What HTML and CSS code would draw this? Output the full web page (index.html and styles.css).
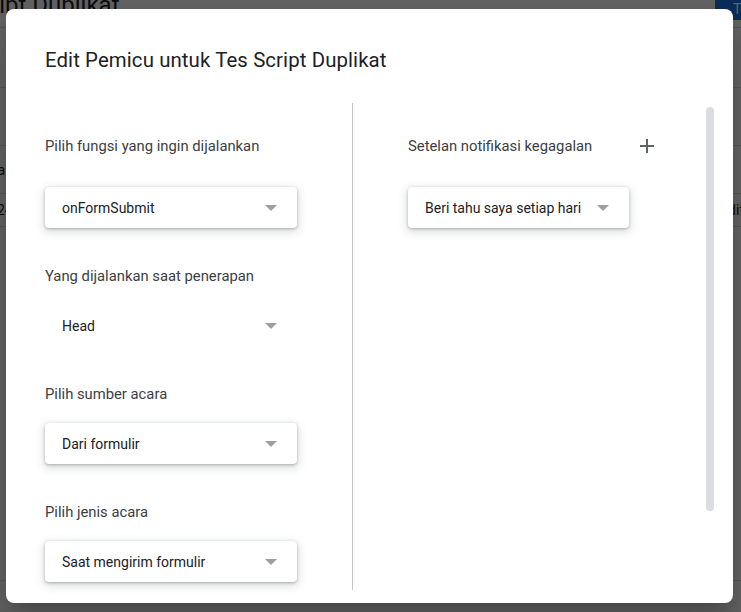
FILE: index.html
```html
<!DOCTYPE html>
<html lang="id">
<head>
<meta charset="utf-8">
<title>Edit Pemicu</title>
<link rel="stylesheet" href="styles.css">
</head>
<body>
<div class="page" aria-hidden="true">
  <div class="page-header">
    <div class="page-title">Tes Script Duplikat</div>
    <div class="page-btn">Tambahkan Pemicu</div>
  </div>
  <div class="page-toolbar"></div>
  <div class="page-row row-h"></div>
  <div class="page-row row-a"><span class="cell-left">Data</span><span class="cell-right"></span></div>
  <div class="page-row row-b"><span class="cell-left">24</span><span class="cell-right">Edit</span></div>
  <div class="page-row row-c"></div>
</div>
<div class="scrim"></div>

<div class="dialog" role="dialog">
  <h1 class="dialog-title">Edit Pemicu untuk Tes Script Duplikat</h1>
  <div class="dialog-body">
    <div class="col col-left">
      <div class="field">
        <div class="field-label tall">Pilih fungsi yang ingin dijalankan</div>
        <div class="select"><span>onFormSubmit</span><span class="arrow"></span></div>
      </div>
      <div class="field">
        <div class="field-label">Yang dijalankan saat penerapan</div>
        <div class="select flat"><span>Head</span><span class="arrow"></span></div>
      </div>
      <div class="field">
        <div class="field-label">Pilih sumber acara</div>
        <div class="select"><span>Dari formulir</span><span class="arrow"></span></div>
      </div>
      <div class="field">
        <div class="field-label">Pilih jenis acara</div>
        <div class="select"><span>Saat mengirim formulir</span><span class="arrow"></span></div>
      </div>
    </div>
    <div class="col col-right">
      <div class="field">
        <div class="field-label tall">
          <span>Setelan notifikasi kegagalan</span>
          <span class="icon-btn">
            <svg width="14" height="14" viewBox="0 0 14 14"><path d="M7 0v14M0 7h14" stroke="#5f6368" stroke-width="2" fill="none"/></svg>
          </span>
        </div>
        <div class="select auto"><span>Beri tahu saya setiap hari</span><span class="arrow"></span></div>
      </div>
    </div>
    <div class="scrollbar"><div class="thumb"></div></div>
  </div>
</div>
</body>
</html>
```

FILE: styles.css
```css
* { box-sizing: border-box; }
html, body { margin: 0; padding: 0; }
body {
  width: 741px;
  height: 612px;
  overflow: hidden;
  position: relative;
  background: #fff;
  font-family: Roboto, "Liberation Sans", Arial, sans-serif;
  color: #202124;
}

/* background page */
.page { width: 741px; height: 612px; overflow: hidden; }
.page-header {
  height: 28px;
  border-bottom: 1px solid #dadce0;
  display: flex;
  justify-content: space-between;
  align-items: flex-start;
}
.page-title {
  font-size: 24px;
  line-height: 28px;
  margin-top: -9px;
  margin-left: -80px;
  white-space: nowrap;
  color: #202124;
}
.page-btn {
  background: #1a73e8;
  color: #fff;
  font-size: 14px;
  line-height: 20px;
  height: 21px;
  padding: 0 0 0 18px;
  margin-top: -1px;
  width: 26px;
  overflow: hidden;
  white-space: nowrap;
  border-radius: 0 0 0 4px;
}
.page-toolbar { height: 60px; border-bottom: 1px solid #dadce0; }
.page-row {
  display: flex;
  justify-content: space-between;
  align-items: center;
  border-bottom: 1px solid #dadce0;
  font-size: 14px;
  color: #202124;
}
.row-h { height: 58px; }
.row-a { height: 48px; }
.row-b { height: 33px; }
.row-c { height: 354px; }
.cell-left { margin-left: -24px; }
.row-b .cell-left { margin-left: -3px; }
.cell-right { margin-right: -3px; }

.scrim {
  position: absolute;
  inset: 0;
  background: rgba(0, 0, 0, 0.62);
}

/* dialog */
.dialog {
  position: absolute;
  left: 6px;
  top: 9px;
  width: 727px;
  height: 594px;
  background: #fff;
  border-radius: 8px;
  padding: 39px 19px 13px 39px;
  display: flex;
  flex-direction: column;
  box-shadow: 0 11px 15px -7px rgba(0,0,0,.2), 0 24px 38px 3px rgba(0,0,0,.14);
}
.dialog-title {
  margin: 0 0 31px;
  font-size: 20.4px;
  line-height: 24px;
  font-weight: 400;
  color: #202124;
  letter-spacing: 0.1px;
}
.dialog-body {
  flex: 1;
  display: flex;
  min-height: 0;
}
.col { padding-top: 21px; }
.col-left {
  width: 308px;
  border-right: 1px solid #c6c6c6;
}
.col-right {
  flex: 1;
  padding-left: 55px;
}
.field + .field { margin-top: 38px; }
.field-label {
  height: 20px;
  line-height: 20px;
  font-size: 14.8px;
  color: #3c4043;
  display: flex;
  align-items: center;
}
.field-label.tall { height: 44px; }
.icon-btn {
  width: 40px;
  height: 40px;
  margin-left: 35px;
  display: flex;
  align-items: center;
  justify-content: center;
}
.select {
  margin-top: 19px;
  width: 252px;
  height: 41px;
  padding: 0 20px 0 17px;
  display: flex;
  align-items: center;
  justify-content: space-between;
  background: #fff;
  border-radius: 4px;
  font-size: 14px;
  color: #202124;
  box-shadow: 0 1px 3px rgba(60,64,67,.35), 0 3px 8px 2px rgba(60,64,67,.15);
}
.select.flat { box-shadow: none; }
.select.auto { width: auto; display: inline-flex; gap: 16px; }
.arrow {
  width: 0;
  height: 0;
  border-left: 6px solid transparent;
  border-right: 6px solid transparent;
  border-top: 6px solid #9e9e9e;
  margin-top: 1px;
}
.scrollbar {
  width: 8px;
  padding-top: 4px;
}
.thumb {
  height: 404px;
  background: #dadce0;
  border-radius: 4px;
}
```
